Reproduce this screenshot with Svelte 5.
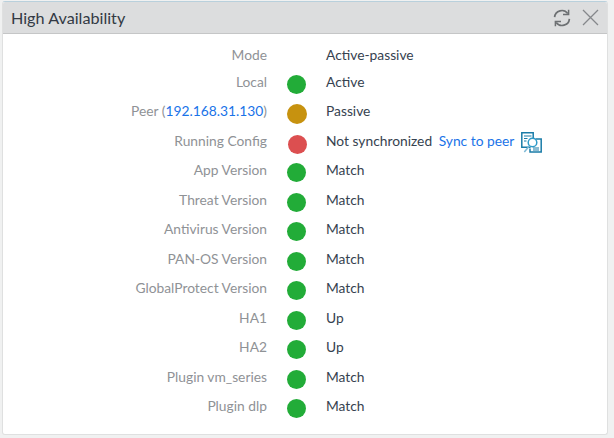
<script>
  const G = '#22ac38';
  const rows = [
    { label: 'Mode', value: 'Active-passive' },
    { label: 'Local', dot: G, value: 'Active' },
    { label: 'Peer (', ip: '192.168.31.130', dot: '#c7920f', value: 'Passive', kind: 'peer' },
    { label: 'Running Config', dot: '#dc4f50', value: 'Not synchronized', sync: true, kind: 'running' },
    { label: 'App Version', dot: G, value: 'Match' },
    { label: 'Threat Version', dot: G, value: 'Match' },
    { label: 'Antivirus Version', dot: G, value: 'Match' },
    { label: 'PAN-OS Version', dot: G, value: 'Match' },
    { label: 'GlobalProtect Version', dot: G, value: 'Match' },
    { label: 'HA1', dot: G, value: 'Up' },
    { label: 'HA2', dot: G, value: 'Up' },
    { label: 'Plugin vm_series', dot: G, value: 'Match' },
    { label: 'Plugin dlp', dot: G, value: 'Match' }
  ];
</script>

<div class="page">
  <section class="panel">
    <header class="head">
      <h1>High Availability</h1>
      <div class="tools">
        <svg width="20" height="18" viewBox="0 0 20 18" fill="none" stroke="#6d7073" stroke-width="1.7">
          <path d="M2.600 8.200A7.300 7.300 0 0 1 15.800 4.600" />
          <path d="M11 5.600h5.600V0.800" stroke-width="1.500" />
          <path d="M17.400 9.800A7.300 7.300 0 0 1 4.200 13.400" />
          <path d="M9 12.400H3.400v4.800" stroke-width="1.500" />
        </svg>
        <svg width="17" height="17" viewBox="0 0 17 17" stroke="#85888b" stroke-width="1.300">
          <path d="M1 1l15 15M16 1L1 16" />
        </svg>
      </div>
    </header>
    <div class="body">
      {#each rows as r}
        <div class="row">
          <div class="label">{r.label}{#if r.ip}<span class="link">{r.ip}</span>){/if}</div>
          <div class="cell">
            {#if r.dot}<span class="dot {r.kind ?? ''}" style="background:{r.dot}"></span>{/if}
          </div>
          <div class="value">
            {r.value}
            {#if r.sync}
              <span class="link sync">Sync to peer</span>
              <svg class="copy" width="21" height="21" viewBox="0 0 21 21" fill="none" stroke="#1a7ca8" stroke-width="1.500">
                <path d="M.8.800h11.400v14.400H.8z" fill="#fff" />
                <path d="M3 4h7.500M3 6.500h3.500M3 9h2.500" stroke-width="1.200" />
                <path d="M14.500 7h5.700v13H9v-3.500" fill="#fff" />
                <circle cx="11.500" cy="10.500" r="4.300" fill="#fff" stroke="#2f9bc9" />
                <path d="M8.300 14l-5 6" stroke="#7db9d6" />
                <path d="M12 16h6M12 18h6" stroke-width="1.100" />
              </svg>
            {/if}
          </div>
        </div>
      {/each}
    </div>
  </section>
</div>

<style>
  :global(body) {
    margin: 0;
    background: #f0f1f1;
  }
  .page {
    width: 614px;
    height: 438px;
    padding: 1px 6px 3px 2px;
    box-sizing: border-box;
    font-family: Lato, sans-serif;
    font-size: 13.800px;
  }
  .panel {
    height: 100%;
    background: #fff;
    border: 1px solid #dfe0e0;
    border-top-color: #b9d0dc;
    border-radius: 3px;
    box-sizing: border-box;
    overflow: hidden;
  }
  .head {
    height: 32px;
    box-sizing: border-box;
    background: #dcddde;
    border-bottom: 1px solid #c5c6c7;
    display: flex;
    align-items: center;
    justify-content: space-between;
    padding: 0 8px;
  }
  h1 {
    margin: 0;
    font-size: 16.200px;
    font-weight: 400;
    color: #333a44;
  }
  .tools {
    display: flex;
    align-items: center;
    gap: 10px;
  }
  .body {
    padding-top: 8px;
  }
  .row {
    height: 29.470px;
    display: flex;
    align-items: center;
    color: #36424f;
  }
  .row:first-child {
    height: 26.700px;
  }
  .row:first-child .label,
  .row:first-child .value {
    margin-bottom: 2px;
  }
  .label {
    width: 264px;
    text-align: right;
    color: #8f9296;
    margin-bottom: 4px;
  }
  .cell {
    width: 59px;
    display: flex;
    box-sizing: border-box;
    padding-left: 20px;
  }
  .dot {
    width: 19px;
    height: 19px;
    margin-top: 2px;
    border-radius: 50%;
  }
  .dot.peer {
    width: 20px;
    height: 20px;
  }
  .dot.running {
    margin-top: 4px;
    margin-left: 1px;
  }
  .value {
    display: flex;
    align-items: center;
    white-space: pre;
    margin-bottom: 4px;
  }
  .link {
    color: #1a73e8;
  }
  .sync {
    margin-left: 3px;
  }
  .copy {
    margin-left: 7px;
    margin-top: 4px;
  }
</style>
